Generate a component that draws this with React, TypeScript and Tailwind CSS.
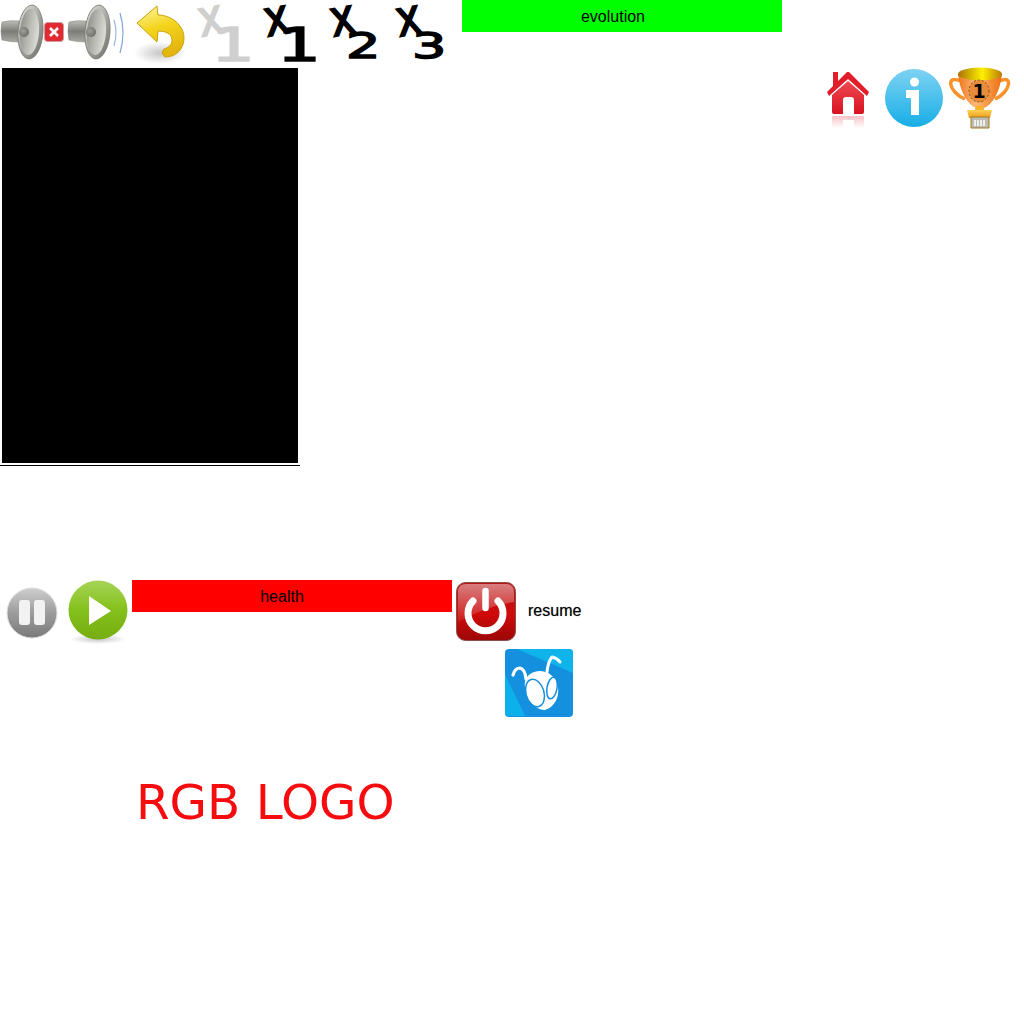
import React from "react";

function Speaker({ id }: { id: string }) {
  return (
    <svg width="44" height="56" viewBox="0 0 44 56" className="shrink-0">
      <defs>
        <linearGradient id={id + "a"} x1="0" y1="0" x2="1" y2="1">
          <stop offset="0" stopColor="#e4e4e0" />
          <stop offset="0.55" stopColor="#a2a29c" />
          <stop offset="1" stopColor="#6f6f69" />
        </linearGradient>
        <linearGradient id={id + "b"} x1="0" y1="0" x2="0" y2="1">
          <stop offset="0" stopColor="#bdbdb8" />
          <stop offset="0.5" stopColor="#7d7d77" />
          <stop offset="1" stopColor="#a9a9a4" />
        </linearGradient>
        <radialGradient id={id + "c"} cx="0.4" cy="0.4" r="0.8">
          <stop offset="0" stopColor="#a0a09a" />
          <stop offset="1" stopColor="#62625c" />
        </radialGradient>
        <linearGradient id={id + "d"} x1="0" y1="0" x2="1" y2="0.2">
          <stop offset="0" stopColor="#8d8d87" />
          <stop offset="0.5" stopColor="#b6b6b0" />
          <stop offset="1" stopColor="#d9d9d5" />
        </linearGradient>
      </defs>
      <path d="M2 18 Q0 27 2 36 Q10 38 19 38 L19 17 Q10 16 2 18Z" fill={`url(#${id}b)`} stroke="#8a8a86" strokeWidth="0.6" />
      <ellipse cx="30.5" cy="28" rx="12.5" ry="27" fill={`url(#${id}a)`} stroke="#77776f" strokeWidth="0.8" transform="rotate(4 30.5 28)" />
      <ellipse cx="29.5" cy="28" rx="9.5" ry="23" fill={`url(#${id}d)`} transform="rotate(4 29.5 28)" />
      <circle cx="24" cy="28" r="5" fill={`url(#${id}c)`} />
    </svg>
  );
}

function Undo() {
  return (
    <svg width="52" height="66" viewBox="0 0 52 66" className="shrink-0">
      <defs>
        <linearGradient id="undoG" x1="0" y1="0" x2="0.3" y2="1">
          <stop offset="0" stopColor="#fff6a8" />
          <stop offset="0.5" stopColor="#f4d51e" />
          <stop offset="1" stopColor="#e4b60e" />
        </linearGradient>
        <radialGradient id="undoS">
          <stop offset="0" stopColor="#999" stopOpacity="0.55" />
          <stop offset="1" stopColor="#999" stopOpacity="0" />
        </radialGradient>
      </defs>
      <ellipse cx="25" cy="53" rx="26" ry="11" fill="url(#undoS)" />
      <path d="M22 6 L2 23 L22 42 L23 31 C31 31 37 34 37 40 C37 45 33 48 29 49 C27 51 27 55 30 57 C42 57 49 48 49 38 C49 25 36 15 23 15Z" fill="url(#undoG)" stroke="#c9a20c" strokeWidth="1" strokeLinejoin="round" />
    </svg>
  );
}

function Times({ digit, gray, big }: { digit: string; gray?: boolean; big?: boolean }) {
  const tone = gray ? "[-webkit-text-stroke:1.5px_#cfcfcf] text-[#cfcfcf]" : "[-webkit-text-stroke:1.5px_black] text-black";
  return (
    <div className={`w-[66px] h-[66px] shrink-0 flex items-start font-['DejaVu_Sans',sans-serif] ${tone}`}>
      <span className="text-[42px] leading-[28px] mt-[4px] -rotate-[10deg] scale-y-[1.2]">x</span>
      <span
        className={
          big
            ? "text-[46px] leading-[26px] mt-[32px] -ml-[12px] origin-left scale-x-[1.5]"
            : "text-[36px] leading-[26px] mt-[33px] -ml-[9px] origin-left scale-x-[1.5]"
        }
      >
        {digit}
      </span>
    </div>
  );
}

function Home() {
  return (
    <svg width="44" height="58" viewBox="0 0 44 58" className="shrink-0">
      <defs>
        <linearGradient id="homeG" x1="0" y1="0" x2="0" y2="1">
          <stop offset="0" stopColor="#ee4a55" />
          <stop offset="1" stopColor="#d8121e" />
        </linearGradient>
        <linearGradient id="homeR" x1="0" y1="0" x2="0" y2="1">
          <stop offset="0" stopColor="#e8505a" stopOpacity="0.35" />
          <stop offset="1" stopColor="#e8505a" stopOpacity="0" />
        </linearGradient>
      </defs>
      <path d="M6 24 L6 41 Q6 43 8 43 L17 43 L17 29 Q17 26 20 26 L25 26 Q28 26 28 29 L28 43 L36 43 Q38 43 38 41 L38 24 L22 10Z" fill="url(#homeG)" />
      <path d="M1 21 L7 15 L7 1 L12 1 L12 10 L21 1 L23 1 L43 21 L41 25 L22 8 L3 25Z" fill="#e31e2b" />
      <path d="M6 45 H17 V57 H6Z M28 45 H38 V57 H28Z M17 45 H28 V49 H17Z" fill="url(#homeR)" />
    </svg>
  );
}

function Info() {
  return (
    <svg width="60" height="60" viewBox="0 0 60 60" className="shrink-0">
      <defs>
        <linearGradient id="infoG" x1="0" y1="0" x2="0" y2="1">
          <stop offset="0" stopColor="#7ed2f2" />
          <stop offset="1" stopColor="#17aee6" />
        </linearGradient>
      </defs>
      <circle cx="30" cy="30" r="29" fill="url(#infoG)" />
      <circle cx="30.5" cy="14" r="4.5" fill="#fff" />
      <path d="M22 22 H35 V47 H27 V30 H22Z" fill="#fff" />
    </svg>
  );
}

function Trophy() {
  return (
    <svg width="62" height="64" viewBox="0 0 62 64" className="shrink-0">
      <defs>
        <linearGradient id="cupG" x1="0" y1="0" x2="1" y2="0">
          <stop offset="0" stopColor="#f0761c" />
          <stop offset="0.4" stopColor="#fbb878" />
          <stop offset="1" stopColor="#ee6f10" />
        </linearGradient>
        <linearGradient id="rimG" x1="0" y1="0" x2="1" y2="0">
          <stop offset="0" stopColor="#a87205" />
          <stop offset="0.55" stopColor="#fff000" />
          <stop offset="1" stopColor="#b77d05" />
        </linearGradient>
        <linearGradient id="baseG" x1="0" y1="0" x2="0" y2="1">
          <stop offset="0" stopColor="#fbd25a" />
          <stop offset="1" stopColor="#f09a15" />
        </linearGradient>
      </defs>
      <path d="M11 15 C-3 8 -1 26 16 33 M51 15 C64 8 62 26 46 33" fill="none" stroke="#f9922a" strokeWidth="3.5" />
      <path d="M9 8 C11 26 18 38 27 42 L35 42 C44 38 51 26 53 8Z" fill="url(#cupG)" />
      <ellipse cx="31" cy="8" rx="22" ry="6.5" fill="url(#rimG)" />
      <ellipse cx="30" cy="25" rx="10" ry="11" fill="#e88c3c" stroke="#7a5418" strokeDasharray="2 2" />
      <path d="M27 40 H34 L37 50 H24Z" fill="#f8b52a" />
      <path d="M18 44 H43 L41 52 H20Z" fill="url(#baseG)" />
      <path d="M22 51 H40 V62 H22Z" fill="#bcbcb2" stroke="#a27a20" strokeWidth="1" />
      <path d="M26 54 V60 M29 54 V60 M32 54 V60 M35 54 V60" stroke="#fff" strokeWidth="1.5" />
      <text x="30" y="32" textAnchor="middle" fontFamily="'DejaVu Sans',sans-serif" fontWeight="700" fontSize="19" fill="#000">1</text>
    </svg>
  );
}

function Pause() {
  return (
    <svg width="52" height="52" viewBox="0 0 52 52" className="shrink-0">
      <defs>
        <linearGradient id="pauseG" x1="0" y1="0" x2="0" y2="1">
          <stop offset="0" stopColor="#cfcfcf" />
          <stop offset="0.5" stopColor="#9c9c9c" />
          <stop offset="1" stopColor="#7a7a7a" />
        </linearGradient>
      </defs>
      <circle cx="26" cy="26" r="25" fill="url(#pauseG)" stroke="#ddd" strokeWidth="1" />
      <rect x="13" y="13" width="11" height="25" rx="3" fill="#f2f2f2" />
      <rect x="28" y="13" width="11" height="25" rx="3" fill="#f2f2f2" />
    </svg>
  );
}

function Play() {
  return (
    <svg width="60" height="64" viewBox="0 0 60 64" className="shrink-0">
      <defs>
        <linearGradient id="playG" x1="0" y1="0" x2="0" y2="1">
          <stop offset="0" stopColor="#a6d457" />
          <stop offset="0.5" stopColor="#84c11b" />
          <stop offset="1" stopColor="#75ad12" />
        </linearGradient>
        <radialGradient id="playS">
          <stop offset="0" stopColor="#888" stopOpacity="0.5" />
          <stop offset="1" stopColor="#888" stopOpacity="0" />
        </radialGradient>
      </defs>
      <ellipse cx="30" cy="59" rx="28" ry="5" fill="url(#playS)" />
      <circle cx="30" cy="30" r="29.5" fill="url(#playG)" />
      <path d="M21 16 L43 31 L21 45Z" fill="#fff" />
    </svg>
  );
}

function Power() {
  return (
    <svg width="60" height="60" viewBox="0 0 60 60" className="shrink-0">
      <defs>
        <linearGradient id="powG" x1="0" y1="0" x2="0" y2="1">
          <stop offset="0" stopColor="#b81515" />
          <stop offset="0.55" stopColor="#cf0a0a" />
          <stop offset="1" stopColor="#9c0707" />
        </linearGradient>
        <linearGradient id="powH" x1="0" y1="0" x2="0" y2="1">
          <stop offset="0" stopColor="#fff" stopOpacity="0.45" />
          <stop offset="1" stopColor="#fff" stopOpacity="0.06" />
        </linearGradient>
      </defs>
      <rect x="0.5" y="0.5" width="59" height="58" rx="9" fill="url(#powG)" stroke="#8a5050" />
      <path d="M2 10 Q2 2 10 2 H50 Q58 2 58 10 V20 Q30 24 2 40Z" fill="url(#powH)" />
      <path d="M17 19 A17.5 17.5 0 1 0 42 19" fill="none" stroke="#fff" strokeWidth="7" strokeLinecap="round" />
      <path d="M29.5 9 V26" stroke="#fff" strokeWidth="6.5" strokeLinecap="round" />
    </svg>
  );
}

function Ant() {
  return (
    <svg width="68" height="68" viewBox="0 0 68 68" className="shrink-0">
      <rect width="68" height="68" rx="4" fill="#1490de" />
      <path d="M12 0 H64 Q68 0 68 4 V24 Z" fill="#0fb4ea" />
      <path d="M0 25 L20 67 H4 Q0 67 0 63 Z" fill="#0cb0ea" />
      <path d="M42 23 Q43 13 47 8 Q52 9 55 13" fill="none" stroke="#fff" strokeWidth="3" strokeLinecap="round" strokeLinejoin="round" />
      <path d="M21 30 Q20 20 15 19 Q10 19 8 26" fill="none" stroke="#fff" strokeWidth="3.2" strokeLinecap="round" />
      <path d="M20 32 C24 20 44 17 52 34 C56 46 50 58 40 61 C30 62 18 46 20 32Z" fill="#fff" />
      <ellipse cx="30" cy="44" rx="9" ry="14" fill="#fff" stroke="#1490de" strokeWidth="1.5" transform="rotate(-16 30 44)" />
      <ellipse cx="47" cy="39" rx="5" ry="11" fill="#fff" stroke="#1490de" strokeWidth="1.5" transform="rotate(10 47 39)" />
    </svg>
  );
}

function Bar({ label, color, pad }: { label: string; color: string; pad: string }) {
  return (
    <div className={`w-[320px] h-[32px] shrink-0 flex items-center justify-center pt-[1px] text-[16px] text-black font-['Liberation_Sans',sans-serif] ${pad} ${color}`}>
      {label}
    </div>
  );
}

export default function App() {
  return (
    <div className="w-[1024px] h-[1024px] bg-white flex flex-col overflow-hidden">
      <div className="h-[66px] flex items-start">
        <div className="flex items-start pt-[4px]">
          <Speaker id="s1" />
          <svg width="20" height="20" viewBox="0 0 20 20" className="shrink-0 mt-[18px]">
            <rect x="0.5" y="0.5" width="19" height="19" rx="3" fill="#e22a32" stroke="#c9a0a0" />
            <path d="M6 6 L14 14 M14 6 L6 14" stroke="#fff" strokeWidth="2.6" />
          </svg>
          <div className="w-[3px]" />
          <Speaker id="s2" />
          <svg width="16" height="44" viewBox="0 0 16 44" className="shrink-0 mt-[8px]">
            <path d="M3 8 Q7 20 3 34" fill="none" stroke="#9db8dc" strokeWidth="1.2" />
            <path d="M9 1 Q15 20 9 41" fill="none" stroke="#7fa4d6" strokeWidth="1.2" />
          </svg>
          <div className="w-[8px]" />
        </div>
        <Undo />
        <div className="w-[11px]" />
        <Times digit="1" gray big />
        <Times digit="1" big />
        <Times digit="2" />
        <Times digit="3" />
        <Bar label="evolution" color="bg-[#00ff00]" pad="pr-[18px]" />
      </div>

      <div className="h-[514px] flex justify-between items-start">
        <div className="w-[300px] h-[400px] pt-[2px] flex flex-col border-b border-black">
          <div className="w-[296px] h-[395px] mx-[2px] bg-black" />
        </div>
        <div className="flex items-start pr-[13px]">
          <div className="mt-[5px]"><Home /></div>
          <div className="ml-[14px] mt-[2px]"><Info /></div>
          <div className="ml-[5px]"><Trophy /></div>
        </div>
      </div>

      <div className="h-[69px] flex items-start">
        <div className="ml-[6px] mt-[7px]"><Pause /></div>
        <div className="ml-[10px]"><Play /></div>
        <div className="ml-[4px]"><Bar label="health" color="bg-[#ff0000]" pad="pr-[20px]" /></div>
        <div className="ml-[4px] mt-[2px]"><Power /></div>
        <span className="ml-[12px] mt-[21px] text-[16px] leading-[20px] text-black font-['Liberation_Sans',sans-serif] [text-shadow:0_0_1px_#888]">resume</span>
      </div>

      <div className="h-[68px] pl-[505px] flex"><Ant /></div>

      <div className="pl-[136px] mt-[53px] text-[#f60b0f] text-[48.4px] leading-[64px] font-['DejaVu_Sans',sans-serif]">RGB LOGO</div>
    </div>
  );
}
